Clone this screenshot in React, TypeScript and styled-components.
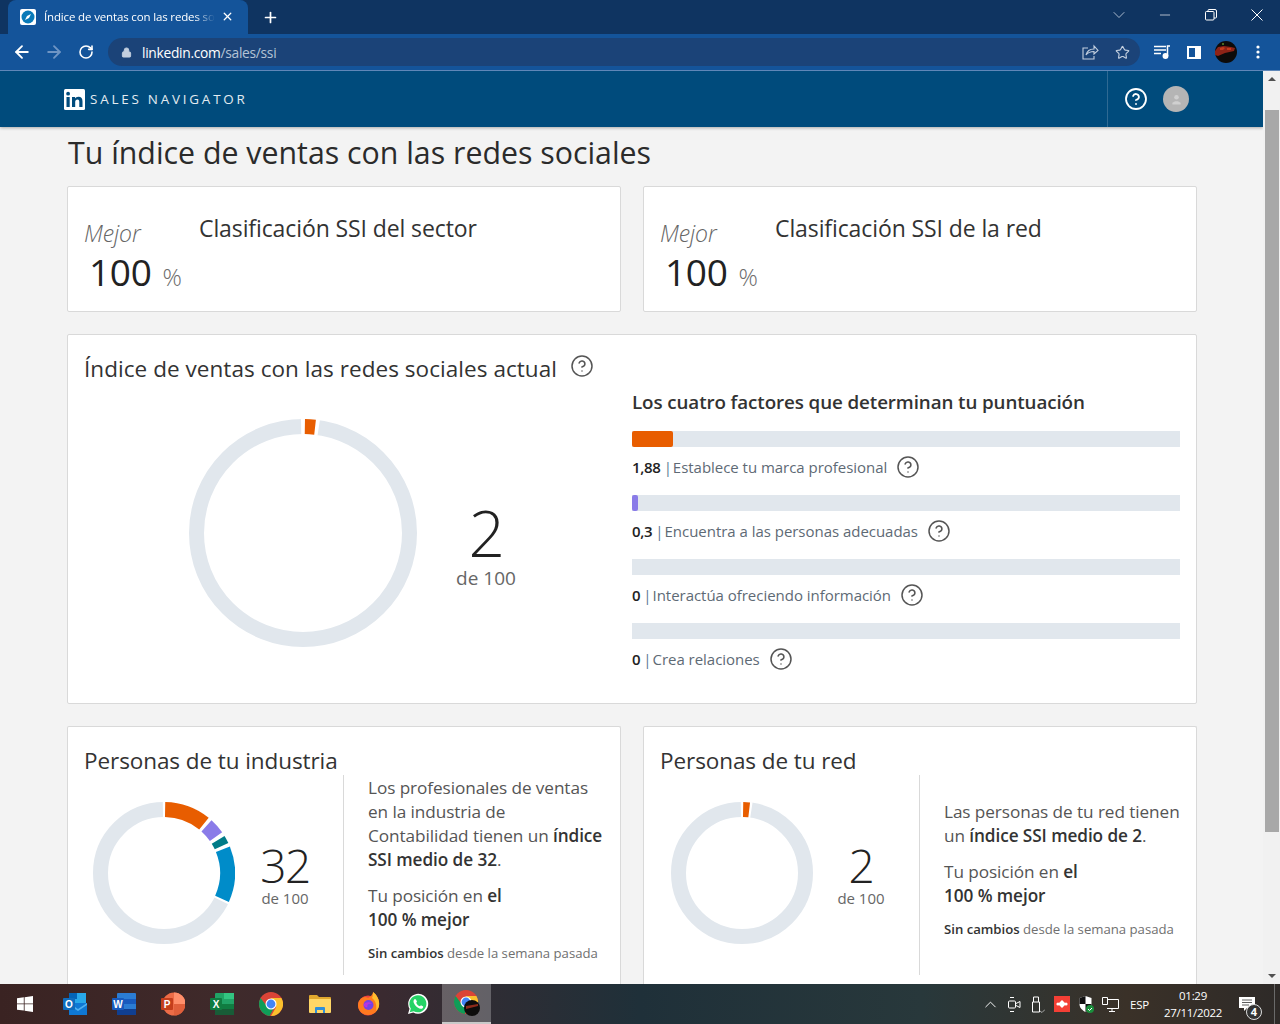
import React from "react";
import styled, { createGlobalStyle } from "styled-components";
import { ArrowLeft, ArrowRight, RotateCw, Lock, Star, X, Plus, ChevronDown, Minus, CircleHelp, ChevronUp } from "lucide-react";

const Global = createGlobalStyle`
  html, body { margin: 0; padding: 0; height: 100%; overflow: hidden; background: #f3f3f3; }
  * { box-sizing: border-box; }
  body { font-family: "Open Sans", "Liberation Sans", sans-serif; }
`;

const Screen = styled.div`
  width: 1280px; height: 1024px; display: flex; flex-direction: column; overflow: hidden;
`;
const TabStrip = styled.div`
  height: 34px; background: #0f3461; display: flex; align-items: flex-end; padding-left: 8px; flex: none;
`;
const Tab = styled.div`
  width: 240px; height: 34px; background: #14549a; border-radius: 8px 8px 0 0; display: flex; align-items: center;
  padding: 0 14px 1px 12px; color: #fff; font-size: 11.5px; letter-spacing: -0.15px;
`;
const Favicon = styled.svg`width: 16px; height: 16px; flex: none; margin-right: 8px;`;
const TabTitle = styled.span`
  flex: 1; white-space: nowrap; overflow: hidden;
  -webkit-mask-image: linear-gradient(90deg, #000 88%, transparent 100%);
  mask-image: linear-gradient(90deg, #000 88%, transparent 100%);
`;
const NewTab = styled.div`
  width: 44px; height: 34px; display: flex; align-items: center; justify-content: center; color: #fff;
`;
const WindowControls = styled.div`
  margin-left: auto; height: 34px; display: flex; align-items: center; color: #fff;
`;
const WinButton = styled.div`
  width: 46px; height: 30px; display: flex; align-items: center; justify-content: center; margin-bottom: 4px;
`;
const Toolbar = styled.div`
  height: 37px; background: #14549a; border-bottom: 1px solid #5f87b8; display: flex; align-items: center; padding: 0 0 0 6px; flex: none; color: #fff;
`;
const NavBtn = styled.div<{ $dim?: boolean }>`
  width: 32px; height: 28px; display: flex; align-items: center; justify-content: center;
  color: ${p => (p.$dim ? "#6f95c4" : "#fff")};
`;
const Omnibox = styled.div`
  width: 1032px; height: 28px; margin-left: 6px; background: #1b4378; border-radius: 14px; display: flex; align-items: center;
  padding: 0 8px 0 13px; font-size: 13.8px; letter-spacing: -0.3px; color: #fff;
`;
const Host = styled.span`margin-left: 10px; color: #fff;`;
const UrlPath = styled.span`color: #b4c3d6;`;
const OmniIcons = styled.div`margin-left: auto; display: flex; align-items: center; gap: 16px; color: #c3cfdf; padding-right: 2px;`;
const ToolIcons = styled.div`display: flex; align-items: center; margin-left: 6px;`;
const ToolSlot = styled.div`width: 32px; display: flex; align-items: center; justify-content: center;`;

const Viewport = styled.div`flex: 1; min-height: 0; display: flex;`;
const Page = styled.div`flex: 1; min-width: 0; overflow: hidden; background: #f3f3f3;`;
const Scrollbar = styled.div`
  width: 17px; flex: none; background: #f1f1f1; display: flex; flex-direction: column; align-items: center;
  position: relative; padding-top: 39px;
`;
const ScrollUp = styled.div`
  position: absolute; top: 6px; left: 5px; width: 0; height: 0;
  border-left: 4px solid transparent; border-right: 4px solid transparent; border-bottom: 4px solid #505050;
`;
const ScrollDown = styled.div`
  position: absolute; bottom: 6px; left: 5px; width: 0; height: 0;
  border-left: 4px solid transparent; border-right: 4px solid transparent; border-top: 4px solid #505050;
`;
const Thumb = styled.div`width: 14px; height: 722px; background: #a8a8a8; margin-left: 1px;`;

const Header = styled.header`
  height: 56px; background: #004b7c; display: flex; align-items: center; padding-left: 64px;
  box-shadow: 0 1px 3px rgba(0,0,0,.3); position: relative;
`;
const LogoMark = styled.svg`width: 21px; height: 21px; flex: none;`;
const Brand = styled.span`
  margin-left: 5px; color: #e4ebf1; font-size: 13.4px; letter-spacing: 2.8px; font-weight: 400; white-space: nowrap;
`;
const HeaderTools = styled.div`
  margin-left: auto; width: 156px; height: 56px; border-left: 1px solid #2f6a93; display: flex; align-items: center; padding-left: 16px; gap: 15px; color: #fff;
`;
const UserDot = styled.div`
  width: 26px; height: 26px; border-radius: 50%; background: #b5b5b5; display: flex; align-items: center; justify-content: center;
`;

const Main = styled.main`padding: 0 0 0 67px; width: 1197px;`;
const Title = styled.h1`
  margin: 0; height: 59px; font-size: 30.3px; font-weight: 400; line-height: 52px; color: #2b2b2b; padding-left: 1px; letter-spacing: 0; white-space: nowrap;
`;
const Row = styled.div`display: grid; grid-template-columns: 554px 554px; gap: 22px; margin-bottom: 22px;`;
const Card = styled.section`background: #fff; border: 1px solid #d9d9d9; border-radius: 2px;`;
const RankCard = styled(Card)`height: 126px; display: flex; padding: 0 16px;`;
const RankScore = styled.div`width: 115px; flex: none; padding-top: 29px;`;
const Best = styled.div`font-style: italic; font-size: 23px; line-height: 34px; color: #666; letter-spacing: -0.1px; font-weight: 300;`;
const Big = styled.div`display: flex; align-items: baseline; padding-left: 5px; margin-top: -1px;`;
const BigNum = styled.span`font-size: 37px; line-height: 46px; color: #222; font-weight: 400; letter-spacing: -0.3px;`;
const Pct = styled.span`font-size: 24px; color: #6d6d6d; margin-left: 11px; font-weight: 300;`;
const RankTitle = styled.h2`
  margin: 24px 0 0; font-size: 23px; line-height: 34px; font-weight: 400; color: #333; letter-spacing: -0.1px; white-space: nowrap;
`;

const ScoreCard = styled(Card)`height: 370px; padding: 16px 16px 0; display: flex; flex-direction: column; grid-column: 1 / -1;`;
const CardHeading = styled.div`
  display: flex; align-items: center; height: 34px; color: #555;
  svg { margin-top: -4px; }
`;
const CardTitle = styled.h2`
  margin: 0 13px 0 0; font-size: 22.5px; font-weight: 400; color: #333; letter-spacing: 0.05px; white-space: nowrap;
`;
const PeopleTitle = styled.h2`
  margin: 1px 0 -1px; font-size: 22.5px; font-weight: 400; color: #333; letter-spacing: -0.08px; white-space: nowrap;
`;
const ScoreBody = styled.div`display: flex; flex: 1;`;
const ScoreLeft = styled.div`width: 548px; flex: none; display: flex; align-items: flex-start; padding: 34px 0 0 105px;`;
const RingBox = styled.svg<{ $s: number }>`width: ${p => p.$s}px; height: ${p => p.$s}px; flex: none; display: block;`;
const ScoreValue = styled.div<{ $w: number; $size: number; $sub: number; $ml: number; $mt: number }>`
  width: ${p => p.$w}px; margin: ${p => p.$mt}px 0 0 ${p => p.$ml}px; flex: none; text-align: center; color: #222;
  font-weight: 300; font-size: ${p => p.$size}px; line-height: 1; letter-spacing: -1.5px;
  small { display: block; font-size: ${p => p.$sub}px; color: #666; font-weight: 400; line-height: 1.4; letter-spacing: 0; }
`;
const Factors = styled.div`flex: 1;`;
const FactorHeading = styled.h3`
  margin: 0 0 12px; font-size: 18.8px; line-height: 34px; font-weight: 600; color: #333; letter-spacing: -0.1px; white-space: nowrap;
`;
const Factor = styled.div`height: 64px;`;
const Track = styled.div`height: 16px; background: #e1e7ed; overflow: hidden;`;
const Fill = styled.div<{ $c: string }>`height: 100%; background: ${p => p.$c}; border-radius: 2px;`;
const FactorLabel = styled.div`
  display: flex; align-items: center; height: 40px; font-size: 15px; color: #5e6a75; white-space: nowrap; letter-spacing: -0.03px;
  b { font-weight: 600; color: #222; letter-spacing: -0.3px; }
  i { font-style: normal; color: #5b7a95; margin: 0 1px 0 3px; }
  svg { margin-left: 9px; color: #555; }
`;

const PeopleCard = styled(Card)`height: 320px; padding: 17px 16px 0; border-bottom: 0;`;
const PeopleBody = styled.div`display: flex; align-items: flex-start;`;
const PeopleLeft = styled.div<{ $pl: number }>`
  width: 260px; height: 200px; flex: none; border-right: 1px solid #d9d9d9; display: flex; align-items: center; padding-left: ${p => p.$pl}px; padding-bottom: 4px;
`;
const PeopleText = styled.div<{ $top: number }>`
  padding: ${p => p.$top}px 0 0 24px; font-size: 17.2px; line-height: 24px; color: #555; letter-spacing: -0.08px; white-space: nowrap;
  p { margin: 0 0 12px; }
  b { font-weight: 600; color: #333; }
`;
const Note = styled.p`
  font-size: 13.2px; color: #707070; letter-spacing: -0.02px; margin-top: -3px !important;
`;

const Taskbar = styled.footer`
  height: 40px; flex: none; display: flex; align-items: center; color: #fff;
  background: linear-gradient(90deg, #3a2322 0%, #3f2a2b 18%, #3a2a30 30%, #1f3039 50%, #28383b 72%, #3a3128 88%, #2e2a28 100%);
`;
const StartBtn = styled.div`width: 50px; height: 40px; display: flex; align-items: center; justify-content: center;`;
const TaskIcon = styled.div<{ $active?: boolean }>`
  width: 49px; height: 40px; display: flex; align-items: center; justify-content: center;
  background: ${p => (p.$active ? "rgba(255,255,255,.25)" : "transparent")};
  ${p => (p.$active ? "border-bottom: 2px solid #c9c9c9;" : "")}
`;
const Tray = styled.div`margin-left: auto; display: flex; align-items: center; height: 40px; padding-right: 5px;`;
const TrayIcon = styled.div`width: 24px; height: 40px; display: flex; align-items: center; justify-content: center; color: #fff;`;
const Lang = styled.div`font-size: 11.5px; margin-left: 8px; letter-spacing: -0.2px; width: 35px;`;
const Clock = styled.div`width: 66px; text-align: center; font-size: 11.5px; line-height: 17.5px; letter-spacing: -0.3px; margin-left: -5px;`;
const Notify = styled.div`width: 49px; height: 40px; display: flex; align-items: center; justify-content: center; position: relative; border-right: 1px solid #6a6a6a; padding-right: 7px;`;
const Badge = styled.span`
  position: absolute; left: 20px; top: 20px; width: 16px; height: 16px; border-radius: 50%; border: 1px solid #ddd; background: #333;
  font-size: 11px; font-weight: 700; line-height: 14px; text-align: center;
`;

const Ring = ({ size, stroke, segs }: { size: number; stroke: number; segs: [number, number, string][] }) => {
  const c = size / 2, r = c - stroke / 2;
  const pt = (a: number) => {
    const t = (a * Math.PI) / 180;
    return `${(c + r * Math.sin(t)).toFixed(2)} ${(c - r * Math.cos(t)).toFixed(2)}`;
  };
  return (
    <RingBox $s={size} viewBox={`0 0 ${size} ${size}`}>
      <circle cx={c} cy={c} r={r} fill="none" stroke="#e1e7ed" strokeWidth={stroke} />
      {segs.map(([a, b, col], i) => (
        <g key={i}>
          <path d={`M${pt(a - 2)}A${r} ${r} 0 ${b - a + 4 > 180 ? 1 : 0} 1 ${pt(b + 2)}`} fill="none" stroke="#fff" strokeWidth={stroke + 1} />
          <path d={`M${pt(a)}A${r} ${r} 0 ${b - a > 180 ? 1 : 0} 1 ${pt(b)}`} fill="none" stroke={col} strokeWidth={stroke} />
        </g>
      ))}
    </RingBox>
  );
};

const ChromeLogo = ({ s = 24 }: { s?: number }) => (
  <svg width={s} height={s} viewBox="0 0 24 24">
    <circle cx="12" cy="12" r="12" fill="#db4437" />
    <path d="M12 24A12 12 0 0 0 22.400 6H12l5.200 9z" fill="#fbc02d" />
    <path d="M1.600 6A12 12 0 0 0 10.500 23.900L15.600 15H8.400z" fill="#0f9d58" />
    <circle cx="12" cy="12" r="5.500" fill="#fff" />
    <circle cx="12" cy="12" r="4.400" fill="#4285f4" />
  </svg>
);

const WinText = styled.text`font-family: "Liberation Sans", sans-serif; font-weight: 700; fill: #fff;`;

const Question = () => <CircleHelp size={24} strokeWidth={1.5} />;

const factors = [
  { n: "1,88", t: "Establece tu marca profesional", w: 41, c: "#e85d00" },
  { n: "0,3", t: "Encuentra a las personas adecuadas", w: 6, c: "#8a7be8" },
  { n: "0", t: "Interactúa ofreciendo información", w: 0, c: "#007b88" },
  { n: "0", t: "Crea relaciones", w: 0, c: "#008cc9" },
];

export default function App() {
  return (
    <Screen>
      <Global />
      <TabStrip>
        <Tab>
          <Favicon viewBox="0 0 16 16">
            <rect width="16" height="16" rx="2" fill="#fff" />
            <circle cx="8" cy="8" r="6.500" fill="#0a7ab8" />
            <path d="M11 5 9 9 5 11 7 7z" fill="#fff" />
          </Favicon>
          <TabTitle>Índice de ventas con las redes sociales</TabTitle>
          <X size={13} strokeWidth={2.4} style={{ marginLeft: 6 }} />
        </Tab>
        <NewTab><Plus size={17} strokeWidth={2.4} /></NewTab>
        <WindowControls>
          <WinButton><ChevronDown size={20} strokeWidth={1} color="#c9d4e2" /></WinButton>
          <WinButton><Minus size={16} strokeWidth={1} /></WinButton>
          <WinButton>
            <svg width="12" height="12" viewBox="0 0 12 12" fill="none" stroke="#fff"><rect x=".5" y="2.500" width="8.500" height="8.500" rx="1" /><path d="M3 2.500V1.500q0-1 1-1h6q1.500 0 1.500 1.500v6q0 1-1 1H9" /></svg>
          </WinButton>
          <WinButton>
            <svg width="12" height="12" viewBox="0 0 12 12" stroke="#fff" strokeWidth="1"><path d="M.5.5l11 11M11.500.5l-11 11" /></svg>
          </WinButton>
        </WindowControls>
      </TabStrip>
      <Toolbar>
        <NavBtn><ArrowLeft size={20} strokeWidth={2.2} /></NavBtn>
        <NavBtn $dim><ArrowRight size={20} strokeWidth={2.2} /></NavBtn>
        <NavBtn><RotateCw size={16} strokeWidth={2.4} /></NavBtn>
        <Omnibox>
          <Lock size={11} fill="#c3cfdf" color="#c3cfdf" strokeWidth={2} />
          <Host>linkedin.com<UrlPath>/sales/ssi</UrlPath></Host>
          <OmniIcons>
            <svg width="17" height="16" viewBox="0 0 17 16" fill="none" stroke="#c3cfdf" strokeWidth="1.100"><path d="M6 4H1v11h11v-3" /><path d="M4 11c1-4 4-6 8-6V2l4 4.500L12 10V7.500c-3 0-6 1-8 3.500z" /></svg>
            <Star size={15} strokeWidth={1.8} />
          </OmniIcons>
        </Omnibox>
        <ToolIcons>
          <ToolSlot>
            <svg width="17" height="14" viewBox="0 0 17 14" fill="none" stroke="#fff" strokeWidth="1.500"><path d="M0 1.500h12M0 5h12M0 8.500h7" /><path d="M13.500 11V1h2.500" /><circle cx="11.500" cy="11" r="2.200" fill="#fff" /></svg>
          </ToolSlot>
          <ToolSlot>
            <svg width="14" height="13" viewBox="0 0 14 13"><rect width="14" height="13" fill="#fff" /><rect x="2" y="2" width="6" height="9" fill="#14549a" /></svg>
          </ToolSlot>
          <ToolSlot>
            <svg width="22" height="22" viewBox="0 0 22 22">
              <circle cx="11" cy="11" r="11" fill="#0d0b0a" />
              <path d="M0 10l3-4 6-1 7 1 4 1-1 3-9 2-7 3-3-1z" fill="#8e2317" />
              <path d="M5 7l3-1 2 1-2 2-3 0zM12 7l4 0 0 2-4 0z" fill="#c43a1d" />
              <circle cx="8" cy="3" r="1" fill="#5a8a2a" />
            </svg>
          </ToolSlot>
          <ToolSlot>
            <svg width="4" height="14" viewBox="0 0 4 14" fill="#fff"><circle cx="2" cy="2" r="1.600" /><circle cx="2" cy="7" r="1.600" /><circle cx="2" cy="12" r="1.600" /></svg>
          </ToolSlot>
        </ToolIcons>
      </Toolbar>
      <Viewport>
        <Page>
          <Header>
            <LogoMark viewBox="0 0 21 21">
              <rect width="21" height="21" rx="1.500" fill="#fff" />
              <rect x="2.500" y="8" width="3.200" height="10" fill="#004b7c" />
              <circle cx="4.100" cy="4.700" r="1.900" fill="#004b7c" />
              <path d="M8 8h3v1.500c.6-1 1.800-1.800 3.400-1.800 3 0 4.100 1.800 4.100 4.800V18h-3.200v-5c0-1.500-.4-2.600-1.800-2.600-1.500 0-2.300 1-2.300 2.600v5H8z" fill="#004b7c" />
            </LogoMark>
            <Brand>SALES NAVIGATOR</Brand>
            <HeaderTools>
              <CircleHelp size={24} strokeWidth={1.8} />
              <UserDot>
                <svg width="11" height="11" viewBox="0 0 12 12" fill="#d0d0d0"><circle cx="6" cy="3.500" r="2.500" /><path d="M1.500 11.500V9.500L4.500 8h3l3 1.500v2z" /></svg>
              </UserDot>
            </HeaderTools>
          </Header>
          <Main>
            <Title>Tu índice de ventas con las redes sociales</Title>
            <Row>
              <RankCard>
                <RankScore>
                  <Best>Mejor</Best>
                  <Big><BigNum>100</BigNum><Pct>%</Pct></Big>
                </RankScore>
                <RankTitle>Clasificación SSI del sector</RankTitle>
              </RankCard>
              <RankCard>
                <RankScore>
                  <Best>Mejor</Best>
                  <Big><BigNum>100</BigNum><Pct>%</Pct></Big>
                </RankScore>
                <RankTitle>Clasificación SSI de la red</RankTitle>
              </RankCard>
            </Row>
            <Row>
              <ScoreCard>
                <CardHeading>
                  <CardTitle>Índice de ventas con las redes sociales actual</CardTitle>
                  <Question />
                </CardHeading>
                <ScoreBody>
                  <ScoreLeft>
                    <Ring size={228} stroke={15} segs={[[1, 6.5, "#e85d00"]]} />
                    <ScoreValue $w={80} $ml={29} $mt={82} $size={64} $sub={19}>2<small>de 100</small></ScoreValue>
                  </ScoreLeft>
                  <Factors>
                    <FactorHeading>Los cuatro factores que determinan tu puntuación</FactorHeading>
                    {factors.map(f => (
                      <Factor key={f.t}>
                        <Track><Fill $c={f.c} style={{ width: f.w }} /></Track>
                        <FactorLabel>
                          <b>{f.n}</b><i>|</i>{f.t}<Question />
                        </FactorLabel>
                      </Factor>
                    ))}
                  </Factors>
                </ScoreBody>
              </ScoreCard>
            </Row>
            <Row>
              <PeopleCard>
                <PeopleTitle>Personas de tu industria</PeopleTitle>
                <PeopleBody>
                  <PeopleLeft $pl={9}>
                    <Ring size={142} stroke={15} segs={[[1, 39, "#e85d00"], [42, 55, "#8a7be8"], [58.5, 65, "#007b88"], [68, 114, "#008cc9"]]} />
                    <ScoreValue $w={60} $ml={20} $mt={4} $size={46} $sub={15}>32<small>de 100</small></ScoreValue>
                  </PeopleLeft>
                  <PeopleText $top={1}>
                    <p>Los profesionales de ventas<br />en la industria de<br />Contabilidad tienen un <b>índice</b><br /><b>SSI medio de 32</b>.</p>
                    <p>Tu posición en <b>el</b><br /><b>100 % mejor</b></p>
                    <Note><b>Sin cambios</b> desde la semana pasada</Note>
                  </PeopleText>
                </PeopleBody>
              </PeopleCard>
              <PeopleCard>
                <PeopleTitle>Personas de tu red</PeopleTitle>
                <PeopleBody>
                  <PeopleLeft $pl={11}>
                    <Ring size={142} stroke={15} segs={[[1, 6.5, "#e85d00"]]} />
                    <ScoreValue $w={60} $ml={18} $mt={4} $size={46} $sub={15}>2<small>de 100</small></ScoreValue>
                  </PeopleLeft>
                  <PeopleText $top={25}>
                    <p>Las personas de tu red tienen<br />un <b>índice SSI medio de 2</b>.</p>
                    <p>Tu posición en <b>el</b><br /><b>100 % mejor</b></p>
                    <Note><b>Sin cambios</b> desde la semana pasada</Note>
                  </PeopleText>
                </PeopleBody>
              </PeopleCard>
            </Row>
          </Main>
        </Page>
        <Scrollbar>
          <ScrollUp />
          <Thumb />
          <ScrollDown />
        </Scrollbar>
      </Viewport>
      <Taskbar>
        <StartBtn>
          <svg width="16" height="16" viewBox="0 0 16 16" fill="#fff"><path d="M0 2.300 6.800 1.300V7.500H0zM7.600 1.200 16 0v7.500H7.600zM0 8.300h6.800v6.300L0 13.700zM7.600 8.300H16V16l-8.400-1.200z" /></svg>
        </StartBtn>
        <TaskIcon>
          <svg width="24" height="24" viewBox="0 0 24 24">
            <rect x="6" y="1" width="17" height="12" fill="#28a8ea" /><rect x="6" y="1" width="8" height="6" fill="#0364b8" />
            <path d="M6 11h18v12H6z" fill="#0f78d4" /><path d="M6 11l9 6 9-6v2l-9 6-9-6z" fill="#50b0f0" />
            <rect x="0" y="6" width="12" height="12" rx="1" fill="#0f6cbd" /><WinText x="6" y="15.500" fontSize="10" textAnchor="middle">O</WinText>
          </svg>
        </TaskIcon>
        <TaskIcon>
          <svg width="24" height="24" viewBox="0 0 24 24">
            <rect x="5" y="1" width="19" height="22" rx="1" fill="#2b7cd3" /><rect x="5" y="7" width="19" height="5" fill="#185abd" /><rect x="5" y="17" width="19" height="6" fill="#103f91" />
            <rect x="0" y="6" width="12" height="12" rx="1" fill="#185abd" /><WinText x="6" y="15.500" fontSize="10" textAnchor="middle">W</WinText>
          </svg>
        </TaskIcon>
        <TaskIcon>
          <svg width="24" height="24" viewBox="0 0 24 24">
            <circle cx="13" cy="12" r="11.500" fill="#ed6c47" /><path d="M13 12V.5A11.500 11.500 0 0 1 24.500 12z" fill="#ff8f6b" /><path d="M13 12h11.500A11.500 11.500 0 0 1 13 23.500z" fill="#d35230" opacity=".5" />
            <rect x="0" y="6" width="12" height="12" rx="1" fill="#c43e1c" /><WinText x="6" y="15.500" fontSize="10" textAnchor="middle">P</WinText>
          </svg>
        </TaskIcon>
        <TaskIcon>
          <svg width="24" height="24" viewBox="0 0 24 24">
            <rect x="5" y="1" width="19" height="22" rx="1" fill="#21a366" /><rect x="14" y="1" width="10" height="6" fill="#33c481" /><rect x="5" y="12" width="9" height="6" fill="#107c41" /><rect x="14" y="12" width="10" height="5" fill="#107c41" /><rect x="5" y="17" width="19" height="6" fill="#185c37" />
            <rect x="0" y="6" width="12" height="12" rx="1" fill="#107c41" /><WinText x="6" y="15.500" fontSize="10" textAnchor="middle">X</WinText>
          </svg>
        </TaskIcon>
        <TaskIcon><ChromeLogo /></TaskIcon>
        <TaskIcon>
          <svg width="22" height="20" viewBox="0 0 22 20">
            <path d="M0 2q0-1 1-1h7l2 2h11q1 0 1 1v2H0z" fill="#e0a82e" /><rect y="5" width="22" height="14" rx="1" fill="#ffd766" /><path d="M6 19v-5q0-1 1-1h8q1 0 1 1v5h-2v-3H8v3z" fill="#2f8fd9" />
          </svg>
        </TaskIcon>
        <TaskIcon>
          <svg width="24" height="24" viewBox="0 0 24 24">
            <circle cx="11" cy="13.500" r="10" fill="#f0433f" /><path d="M1 13.500C1 8 5 5 8 5c2 0 3 1 3 1l3-2c1-1 2-3 2-4 4 3 7 8 6 14-1 5-5 9-11 9-5 0-10-4-10-9.500z" fill="#ff7a1f" /><path d="M16 0c4 3 7 8 6 14-.5 2-1.500 3.500-3 5 1-5 0-10-4-13 1-2 1-4 1-6z" fill="#ffbd2e" />
            <circle cx="11.500" cy="13" r="5" fill="#7542e5" /><path d="M6.500 13c1-3 6-4 9-1-3-1-6 0-5 3-2 1-3-1-4-2z" fill="#b833e1" />
          </svg>
        </TaskIcon>
        <TaskIcon>
          <svg width="22" height="22" viewBox="0 0 22 22">
            <path d="M1 21l1.500-5.300A10 10 0 1 1 6.300 19.500z" fill="#fff" />
            <path d="M2.800 19.200l1-3.700A8.500 8.500 0 1 1 6.700 18.200z" fill="#25d366" />
            <path d="M8 6c-.5 0-1.500 1-1.500 2.300 0 3 3.800 7 7.200 7.500 1.500.2 2.500-1 2.500-1.800 0-.5-.1-.7-.3-.8l-2-1-.9 1.100c-2-.7-3-1.800-3.800-3.500l.8-1-.9-2.100z" fill="#fff" />
          </svg>
        </TaskIcon>
        <TaskIcon $active>
          <svg width="26" height="26" viewBox="0 0 26 26">
            <circle cx="12" cy="12" r="12" fill="#db4437" />
            <path d="M12 24A12 12 0 0 0 22.400 6H12l5.200 9z" fill="#fbc02d" />
            <path d="M1.600 6A12 12 0 0 0 10.500 23.900L15.600 15H8.400z" fill="#0f9d58" />
            <circle cx="12" cy="12" r="5.500" fill="#fff" />
            <circle cx="12" cy="12" r="4.400" fill="#4285f4" />
            <circle cx="18" cy="18" r="8" fill="#0d0c0c" /><path d="M12 16l12-2v2l-12 3z" fill="#8c2a1a" />
          </svg>
        </TaskIcon>
        <Tray>
          <TrayIcon><ChevronUp size={19} strokeWidth={1.2} /></TrayIcon>
          <TrayIcon>
            <svg width="13" height="17" viewBox="0 0 13 17" fill="none" stroke="#fff"><rect x=".5" y="5" width="7" height="7" rx="1" /><path d="M8 7.500l4-2v6l-4-2M2 1.500h4M2 15.500h4" /></svg>
          </TrayIcon>
          <TrayIcon>
            <svg width="14" height="17" viewBox="0 0 14 17" fill="none" stroke="#fff"><path d="M1.500 6h7v10h-7zM2.500 6V1h5v5" /><path d="M9 15l2 1.500 3-3" stroke="#aaa" /></svg>
          </TrayIcon>
          <TrayIcon>
            <svg width="16" height="16" viewBox="0 0 16 16"><rect width="16" height="16" fill="#f43f35" /><path d="M8 4l4 4-4 4-4-4z" fill="#fff" /><circle cx="4" cy="8" r="1.600" fill="#fff" /><circle cx="12" cy="8" r="1.600" fill="#fff" /></svg>
          </TrayIcon>
          <TrayIcon>
            <svg width="16" height="17" viewBox="0 0 16 17"><path d="M7.500 0l6 2v6c0 4-3 6.500-6 8-3-1.500-6-4-6-8V2z" fill="#fff" /><path d="M7.500 0v8h-6V2zM7.500 8h6c0 4-3 6.500-6 8z" fill="#111" /><circle cx="12" cy="13" r="4" fill="#1a8f3c" /><path d="M10 13l1.500 1.500L14 12" stroke="#fff" fill="none" /></svg>
          </TrayIcon>
          <TrayIcon>
            <svg width="17" height="15" viewBox="0 0 17 15" fill="none" stroke="#fff"><path d="M5 2.500h11.500v9H5M.5 .5h5v7h-5zM10 11.500v3M7 14.500h6" /></svg>
          </TrayIcon>
          <Lang>ESP</Lang>
          <Clock>01:29<br />27/11/2022</Clock>
          <Notify>
            <svg width="16" height="15" viewBox="0 0 16 15"><path d="M0 0h16v11H8l-3 3v-3H0z" fill="#fff" /><path d="M3 3h10M3 5.500h10M3 8h7" stroke="#333" strokeWidth=".8" /></svg>
            <Badge>4</Badge>
          </Notify>
        </Tray>
      </Taskbar>
    </Screen>
  );
}
